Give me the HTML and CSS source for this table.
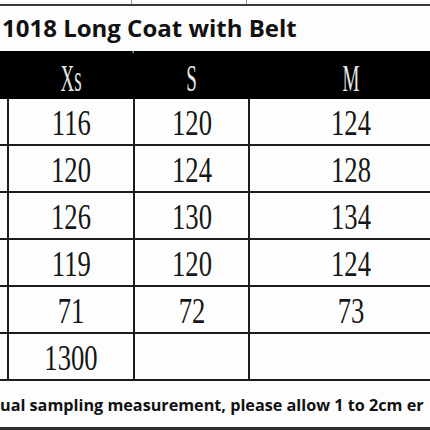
FILE: index.html
```html
<!DOCTYPE html>
<html lang="en">
<head>
  <meta charset="UTF-8">
  <meta name="viewport" content="width=device-width, initial-scale=1.0">
  <title>1018 Long Coat with Belt - Size Chart</title>
  <link rel="stylesheet" href="styles.css">
</head>
<body>
  <div class="sheet">
    <div class="top-rule">
      <span></span><span></span><span></span>
    </div>

    <h1 class="title">1018 Long Coat with Belt</h1>

    <table class="chart">
      <colgroup>
        <col class="col-label">
        <col class="col-xs">
        <col class="col-s">
        <col class="col-m">
      </colgroup>
      <thead>
        <tr>
          <th></th>
          <th><span class="squeeze">Xs</span><i class="mark"></i></th>
          <th><span class="squeeze">S</span></th>
          <th><span class="squeeze">M</span></th>
        </tr>
      </thead>
      <tbody>
        <tr><td></td><td><span class="num">116</span></td><td><span class="num">120</span></td><td><span class="num">124</span></td></tr>
        <tr><td></td><td><span class="num">120</span></td><td><span class="num">124</span></td><td><span class="num">128</span></td></tr>
        <tr><td></td><td><span class="num">126</span></td><td><span class="num">130</span></td><td><span class="num">134</span></td></tr>
        <tr><td></td><td><span class="num">119</span></td><td><span class="num">120</span></td><td><span class="num">124</span></td></tr>
        <tr><td></td><td><span class="num">71</span></td><td><span class="num">72</span></td><td><span class="num">73</span></td></tr>
        <tr><td></td><td><span class="num">1300</span></td><td></td><td></td></tr>
      </tbody>
    </table>

    <p class="note">ual sampling measurement, please allow 1 to 2cm er</p>

    <div class="bottom-rule"></div>
  </div>
</body>
</html>
```

FILE: styles.css
```css
html, body {
  margin: 0;
  padding: 0;
  background: #fff;
}
.sheet {
  width: 430px;
  height: 430px;
  overflow: hidden;
  position: relative;
  background: #fdfdfd;
}
.top-rule {
  display: grid;
  grid-template-columns: 132px 115px 1fr;
  height: 4px;
  border-bottom: 2px solid #3a3a3a;
}
.top-rule span {
  border-right: 1px solid #9a9a9a;
}
.top-rule span:last-child {
  border-right: none;
}
.title {
  margin: 0;
  padding: 7px 0 0 2px;
  height: 38px;
  font-family: "Open Sans", sans-serif;
  font-weight: bold;
  font-size: 24px;
  line-height: 30px;
  color: #111;
  white-space: nowrap;
}
.chart {
  border-collapse: collapse;
  table-layout: fixed;
  width: 512px;
  margin-left: -60px;
  font-family: "Liberation Serif", serif;
}
.col-label { width: 67px; }
.col-xs { width: 126px; }
.col-s { width: 115px; }
.col-m { width: 204px; }
.chart th {
  background: #000;
  color: #e6e6e6;
  height: 42px;
  padding: 6px 0 0;
  font-weight: normal;
  font-size: 38px;
  line-height: 38px;
  position: relative;
}
.chart td {
  height: 43px;
  padding: 2px 0 0;
  border: 2px solid #1c1c1c;
  border-top: none;
  text-align: center;
  font-size: 36px;
  line-height: 38px;
  color: #161616;
}
.squeeze {
  display: inline-block;
  transform: scaleX(0.5);
}
.num {
  display: inline-block;
  transform: scaleX(0.74);
}
.mark {
  position: absolute;
  right: -2px;
  top: 0;
  width: 0;
  height: 0;
  border-left: 4px solid transparent;
  border-top: 7px solid #3fae3a;
}
.note {
  margin: 0;
  padding: 13px 0 0;
  height: 28px;
  font-family: "Open Sans", sans-serif;
  font-weight: bold;
  font-size: 16.2px;
  line-height: 22px;
  color: #111;
  white-space: nowrap;
}
.bottom-rule {
  position: absolute;
  left: 0;
  right: 0;
  bottom: 0;
  height: 3px;
  background: #2e2e2e;
}
```
